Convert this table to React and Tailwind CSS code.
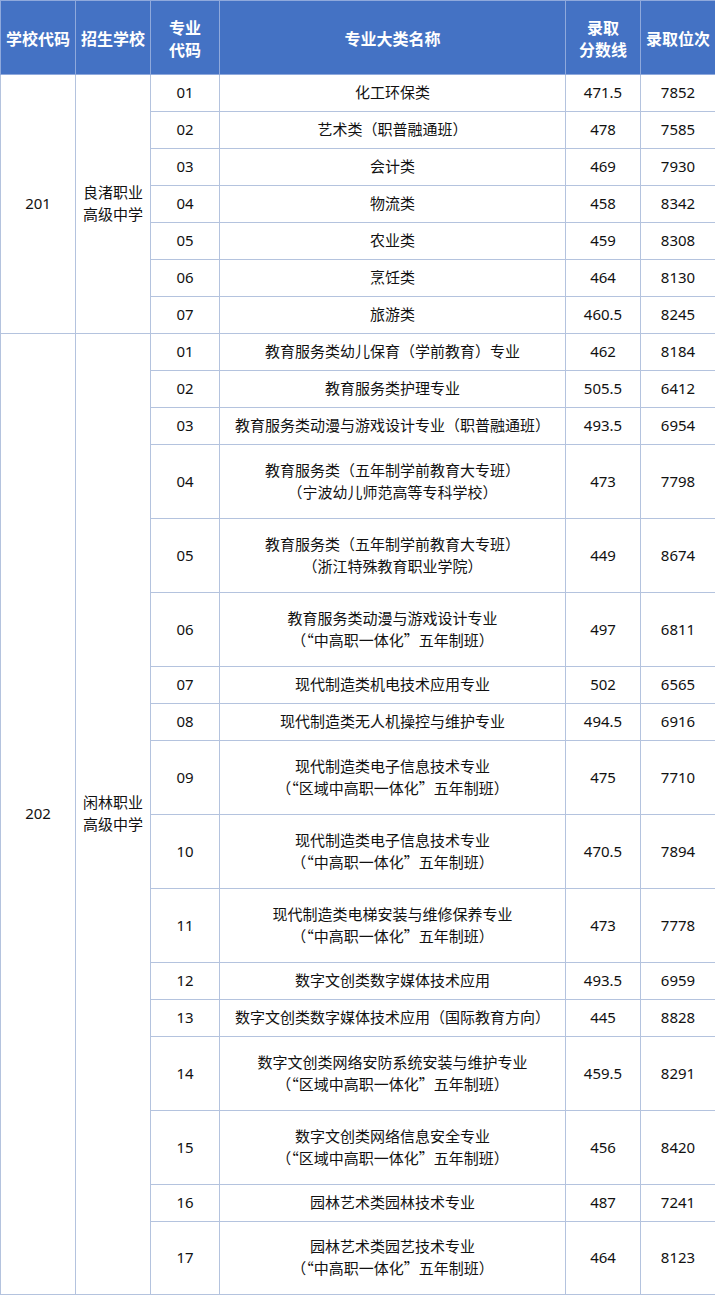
import React from 'react';

const s1 = [
  ['01', '化工环保类', '471.5', '7852'],
  ['02', '艺术类（职普融通班）', '478', '7585'],
  ['03', '会计类', '469', '7930'],
  ['04', '物流类', '458', '8342'],
  ['05', '农业类', '459', '8308'],
  ['06', '烹饪类', '464', '8130'],
  ['07', '旅游类', '460.5', '8245'],
];

const s2 = [
  ['01', ['教育服务类幼儿保育（学前教育）专业'], '462', '8184'],
  ['02', ['教育服务类护理专业'], '505.5', '6412'],
  ['03', ['教育服务类动漫与游戏设计专业（职普融通班）'], '493.5', '6954'],
  ['04', ['教育服务类（五年制学前教育大专班）', '（宁波幼儿师范高等专科学校）'], '473', '7798'],
  ['05', ['教育服务类（五年制学前教育大专班）', '（浙江特殊教育职业学院）'], '449', '8674'],
  ['06', ['教育服务类动漫与游戏设计专业', '（“中高职一体化”五年制班）'], '497', '6811'],
  ['07', ['现代制造类机电技术应用专业'], '502', '6565'],
  ['08', ['现代制造类无人机操控与维护专业'], '494.5', '6916'],
  ['09', ['现代制造类电子信息技术专业', '（“区域中高职一体化”五年制班）'], '475', '7710'],
  ['10', ['现代制造类电子信息技术专业', '（“中高职一体化”五年制班）'], '470.5', '7894'],
  ['11', ['现代制造类电梯安装与维修保养专业', '（“中高职一体化”五年制班）'], '473', '7778'],
  ['12', ['数字文创类数字媒体技术应用'], '493.5', '6959'],
  ['13', ['数字文创类数字媒体技术应用（国际教育方向）'], '445', '8828'],
  ['14', ['数字文创类网络安防系统安装与维护专业', '（“区域中高职一体化”五年制班）'], '459.5', '8291'],
  ['15', ['数字文创类网络信息安全专业', '（“区域中高职一体化”五年制班）'], '456', '8420'],
  ['16', ['园林艺术类园林技术专业'], '487', '7241'],
  ['17', ['园林艺术类园艺技术专业', '（“中高职一体化”五年制班）'], '464', '8123'],
];

const td = 'border border-[#b4c3de] text-center align-middle p-0 pb-[2px] leading-[22px]';
const th = 'border border-[#8fa9dc] text-center align-middle p-0 font-bold text-white text-[16px] leading-[22px]';
const cjk = { fontFamily: '"Noto Sans CJK SC", sans-serif' };

function Row({ r, first, span, code, school, last }) {
  const lines = Array.isArray(r[1]) ? r[1] : [r[1]];
  const h = lines.length > 1 ? (last ? 'h-[73px]' : 'h-[74px]') : 'h-[37px]';
  return (
    <tr className={h}>
      {first && (
        <>
          <td rowSpan={span} className={td}>{code}</td>
          <td rowSpan={span} className={td} style={cjk}>
            {school[0]}<br />{school[1]}
          </td>
        </>
      )}
      <td className={td}>{r[0]}</td>
      <td className={td} style={cjk}>
        {lines.map((l, i) => <div key={i}>{l}</div>)}
      </td>
      <td className={td}>{r[2]}</td>
      <td className={td}>{r[3]}</td>
    </tr>
  );
}

export default function App() {
  return (
    <div className="w-[715px] bg-white" style={{ fontFamily: '"Noto Sans", "Noto Sans CJK SC", sans-serif' }}>
      <table className="w-[715px] table-fixed border-collapse text-[15px] text-[#111] border border-[#4472c4]">
        <colgroup>
          <col className="w-[75px]" />
          <col className="w-[75px]" />
          <col className="w-[69px]" />
          <col className="w-[346px]" />
          <col className="w-[75px]" />
          <col className="w-[75px]" />
        </colgroup>
        <thead>
          <tr className="h-[74px] bg-[#4472c4]" style={cjk}>
            <th className={th}>学校代码</th>
            <th className={th}>招生学校</th>
            <th className={th}>专业<br />代码</th>
            <th className={th}>专业大类名称</th>
            <th className={th}>录取<br />分数线</th>
            <th className={th}>录取位次</th>
          </tr>
        </thead>
        <tbody>
          {s1.map((r, i) => (
            <Row key={'a' + i} r={r} first={i === 0} span={s1.length} code="201" school={['良渚职业', '高级中学']} />
          ))}
          {s2.map((r, i) => (
            <Row key={'b' + i} r={r} first={i === 0} span={s2.length} last={i === s2.length - 1} code="202" school={['闲林职业', '高级中学']} />
          ))}
        </tbody>
      </table>
    </div>
  );
}
